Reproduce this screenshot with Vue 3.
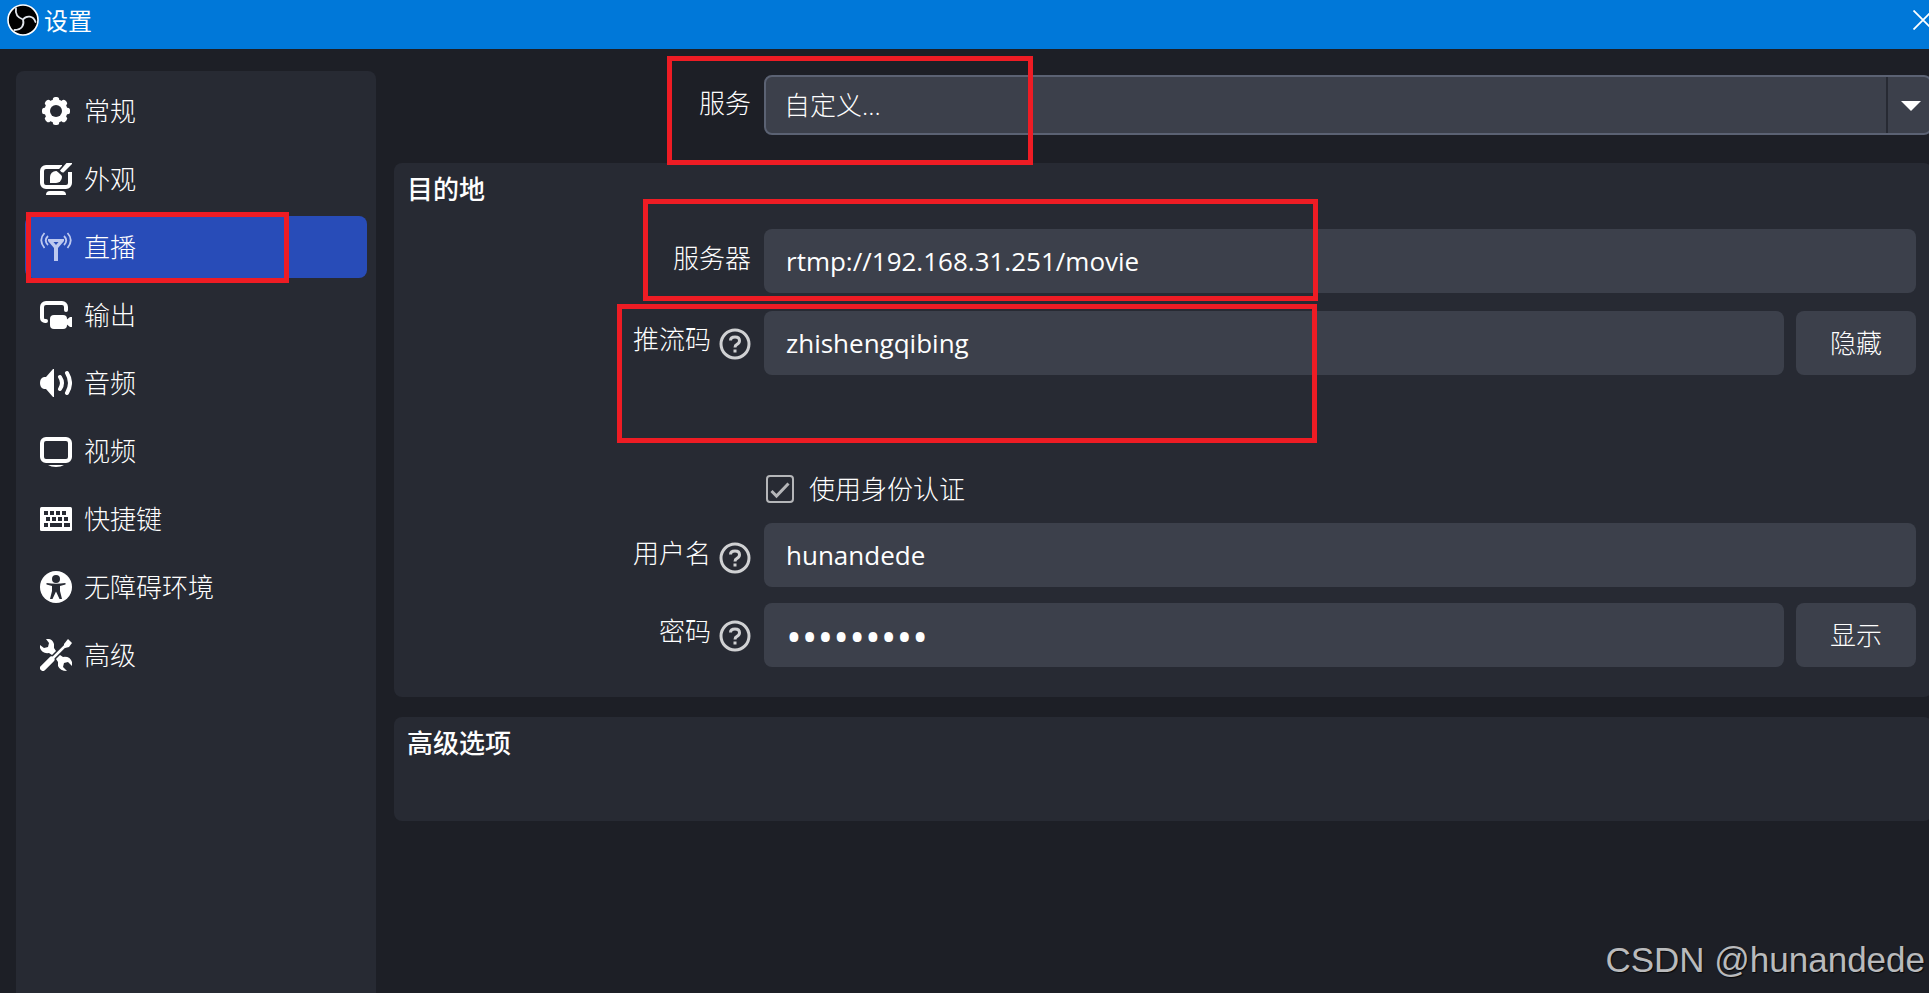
<script setup>
import { ref } from 'vue'

const nav = [
  { id: 'general', label: '常规' },
  { id: 'appearance', label: '外观' },
  { id: 'stream', label: '直播' },
  { id: 'output', label: '输出' },
  { id: 'audio', label: '音频' },
  { id: 'video', label: '视频' },
  { id: 'hotkeys', label: '快捷键' },
  { id: 'accessibility', label: '无障碍环境' },
  { id: 'advanced', label: '高级' },
]
const active = ref('stream')
const service = ref('custom')
const server = ref('rtmp://192.168.31.251/movie')
const streamKey = ref('zhishengqibing')
const useAuth = ref(true)
const username = ref('hunandede')
const password = ref('123456789')
const keyVisible = ref(true)
const passwordVisible = ref(false)
</script>

<template>
  <div class="window">
    <header class="titlebar">
      <svg class="logo" viewBox="0 0 32 32" aria-hidden="true">
        <circle cx="16" cy="16" r="15" fill="#000" stroke="#fff" stroke-width="1.6" />
        <g fill="none" stroke="#e2e6ec" stroke-width="1.8" stroke-linecap="round">
          <path d="M9 4.500C8 10 10.500 13.500 16 15.500M16 15.500C19.500 11 26.500 11.500 28.500 18M16 15.500C17.500 21 15 26 7.500 26" />
        </g>
      </svg>
      <h1 class="title">设置</h1>
      <button class="close" type="button" aria-label="关闭">
        <svg viewBox="0 0 20 20" aria-hidden="true"><path d="M0.500 0.500L19.500 19.500M19.500 0.500L0.500 19.500" stroke="#fff" stroke-width="1.800" /></svg>
      </button>
    </header>

    <div class="body">
      <nav class="sidebar">
        <button
          v-for="item in nav"
          :key="item.id"
          type="button"
          class="nav-item"
          :class="{ active: active === item.id }"
          @click="active = item.id"
        >
          <svg v-if="item.id === 'general'" class="icon" viewBox="0 0 32 32">
            <g fill="#fff">
              <rect v-for="a in [0, 45, 90, 135]" :key="a" x="12.800" y="2" width="6.400" height="28" rx="2.500" :transform="`rotate(${a} 16 16)`" />
              <circle cx="16" cy="16" r="11.500" />
            </g>
            <circle cx="16" cy="16" r="6" fill="#272a33" />
          </svg>
          <svg v-else-if="item.id === 'appearance'" class="icon" viewBox="0 0 32 32">
            <path d="M22 4H6a4 4 0 0 0-4 4v12a4 4 0 0 0 4 4h20a4 4 0 0 0 4-4V9" fill="none" stroke="#fff" stroke-width="4" />
            <path d="M10 20v-6a6 6 0 1 1 6 6z" fill="#fff" />
            <path d="M20 11L29 1" stroke="#272a33" stroke-width="8" />
            <path d="M20 7.500L26.500 0H32v1L23.500 9.500Q21.500 10 20 7.500z" fill="#fff" />
            <path d="M6 32q0-4 4-4h12q4 0 4 4z" fill="#fff" />
          </svg>
          <svg v-else-if="item.id === 'stream'" class="icon" viewBox="0 0 32 32">
            <path d="M8 8h16v2l-6 7V30h-4V17l-6-7z" fill="#bdc9ef" />
            <path d="M13.500 11h5L16 14z" fill="#284cb8" />
            <path d="M4.500 2Q-2 9 4.500 17M8 5Q3.500 9.500 8 14M27.500 2q6.500 7 0 15M24 5q4.500 4.500 0 9" fill="none" stroke="#bdc9ef" stroke-width="1.800" />
          </svg>
          <svg v-else-if="item.id === 'output'" class="icon" viewBox="0 0 32 32">
            <path d="M26 11V8a4 4 0 0 0-4-4H6a4 4 0 0 0-4 4v11a3 3 0 0 0 3 3h1" fill="none" stroke="#fff" stroke-width="4" stroke-linecap="round" />
            <rect x="10" y="16" width="17" height="14" rx="4" fill="#fff" />
            <path d="M25 22l5-4h2v10h-2l-5-4z" fill="#fff" />
          </svg>
          <svg v-else-if="item.id === 'audio'" class="icon" viewBox="0 0 32 32">
            <path d="M14 2v28h-1L6 22H4q-4-1-4-6t4-6h2l7-8z" fill="#fff" />
            <path d="M20 10q4 6 0 12M27 6q6 10 0 20" fill="none" stroke="#fff" stroke-width="4" stroke-linecap="round" />
          </svg>
          <svg v-else-if="item.id === 'video'" class="icon" viewBox="0 0 32 32">
            <rect x="2" y="4" width="28" height="22" rx="4" fill="none" stroke="#fff" stroke-width="4" />
            <path d="M8 30h16q-3 2-8 2t-8-2z" fill="#fff" />
          </svg>
          <svg v-else-if="item.id === 'hotkeys'" class="icon" viewBox="0 0 32 32">
            <rect y="4" width="32" height="24" rx="1.500" fill="#fff" />
            <path d="M4 8h4v4H4zM10 8h4v4h-4zM16 8h4v4h-4zM22 8h4v4h-4zM6 14h4v4H6zM12 14h4v4h-4zM18 14h4v4h-4zM24 14h4v4h-4zM4 20h4v4H4zM10 20h12v4H10zM24 20h6v4h-6z" fill="#272a33" />
          </svg>
          <svg v-else-if="item.id === 'accessibility'" class="icon" viewBox="0 0 32 32">
            <circle cx="16" cy="16" r="16" fill="#fff" />
            <circle cx="16" cy="8" r="4" fill="#272a33" />
            <path d="M6.500 12Q16 13.500 25.500 12v1.500L20 15v5l2 8h-2.500L16 20.500 12.500 28H10l2-8v-5l-5.500-1.500z" fill="#272a33" />
          </svg>
          <svg v-else class="icon" viewBox="0 0 32 32">
            <path d="M12 20L27 5" stroke="#fff" stroke-width="2.500" />
            <path d="M24 5l4-5 4 4-3 4-4 1-1-1z" fill="#fff" />
            <path d="M3 29L11.500 20.500" stroke="#fff" stroke-width="6" stroke-linecap="round" />
            <path d="M6 0Q12-1 14 5v4l2 3-4 4-3-2Q2 15 0 9V6l4 3 4-1 1-4z" fill="#fff" />
            <path d="M16 20l4-4 3 2q7-1 9 5v4l-4-4-4 1-1 4 4 4q-7 0-9-5l0-4z" fill="#fff" />
          </svg>
          <span>{{ item.label }}</span>
        </button>
        <i class="mark mark-nav"></i>
      </nav>

      <main class="main">
        <div class="row service-row">
          <label class="label" for="service">服务</label>
          <div class="select-wrap">
            <select id="service" v-model="service" class="select">
              <option value="custom">自定义...</option>
            </select>
            <svg class="arrow" viewBox="0 0 20 10" aria-hidden="true"><path d="M0 0h20L10 10z" fill="#fff" /></svg>
          </div>
          <i class="mark mark-service"></i>
        </div>

        <section class="group destination">
          <h2 class="group-title">目的地</h2>
          <div class="row server-row">
            <label class="label" for="server">服务器</label>
            <input id="server" v-model="server" class="field" type="text" />
            <i class="mark mark-server"></i>
          </div>
          <div class="row key-row">
            <label class="label" for="key">推流码
              <svg class="help" viewBox="0 0 32 32" aria-hidden="true"><circle cx="16" cy="16" r="14" /><path d="M11.500 12.500Q11.500 9 16 9t4.500 3.800Q20.500 15 18 16.300 16 17.300 16 19.500" /><path d="M16 21.500v3" /></svg>
            </label>
            <input id="key" v-model="streamKey" class="field" :type="keyVisible ? 'text' : 'password'" />
            <button class="btn" type="button" @click="keyVisible = !keyVisible">{{ keyVisible ? '隐藏' : '显示' }}</button>
            <i class="mark mark-key"></i>
          </div>
          <div class="row check-row">
            <span class="label"></span>
            <label class="check"><input v-model="useAuth" type="checkbox" /><span>使用身份认证</span></label>
          </div>
          <div class="row user-row">
            <label class="label" for="user">用户名
              <svg class="help" viewBox="0 0 32 32" aria-hidden="true"><circle cx="16" cy="16" r="14" /><path d="M11.500 12.500Q11.500 9 16 9t4.500 3.800Q20.500 15 18 16.300 16 17.300 16 19.500" /><path d="M16 21.500v3" /></svg>
            </label>
            <input id="user" v-model="username" class="field" type="text" />
          </div>
          <div class="row">
            <label class="label" for="pass">密码
              <svg class="help" viewBox="0 0 32 32" aria-hidden="true"><circle cx="16" cy="16" r="14" /><path d="M11.500 12.500Q11.500 9 16 9t4.500 3.800Q20.500 15 18 16.300 16 17.300 16 19.500" /><path d="M16 21.500v3" /></svg>
            </label>
            <input id="pass" v-model="password" class="field" :type="passwordVisible ? 'text' : 'password'" />
            <button class="btn" type="button" @click="passwordVisible = !passwordVisible">{{ passwordVisible ? '隐藏' : '显示' }}</button>
          </div>
        </section>

        <section class="group advanced">
          <h2 class="group-title">高级选项</h2>
        </section>
      </main>
    </div>
    <div class="watermark">CSDN @hunandede</div>
  </div>
</template>

<style>
body {
  margin: 0;
  background: #1d1f26;
}
</style>

<style scoped>
.window {
  position: relative;
  display: flex;
  flex-direction: column;
  min-height: 100vh;
  overflow: hidden;
  background: #1d1f26;
  color: #fefefe;
  font: 300 26px/32px "Open Sans", "Noto Sans CJK SC", sans-serif;
}
.window * {
  box-sizing: border-box;
}
button,
input,
select {
  margin: 0;
  border: 0;
  color: inherit;
  font: inherit;
}
.titlebar {
  display: flex;
  align-items: flex-start;
  height: 49px;
  padding: 4px 0 0 7px;
  background: #0078d9;
}
.logo {
  width: 32px;
  height: 32px;
}
.title {
  flex: 1;
  margin: 0 0 0 5px;
  font: 400 24px/32px "Noto Sans CJK SC", sans-serif;
}
.close {
  flex: none;
  width: 20px;
  height: 20px;
  margin: 6px -4px 0 0;
  padding: 0;
  background: none;
}
.close svg {
  display: block;
}
.body {
  display: flex;
  flex: 1;
  gap: 18px;
  padding-left: 16px;
}
.sidebar {
  position: relative;
  display: flex;
  flex: none;
  flex-direction: column;
  gap: 6px;
  width: 360px;
  margin-top: 22px;
  padding: 9px;
  border-radius: 8px 8px 0 0;
  background: #272a33;
}
.nav-item {
  display: flex;
  align-items: center;
  gap: 12px;
  height: 62px;
  padding: 0 15px;
  border-radius: 8px;
  background: none;
  text-align: left;
}
.nav-item.active {
  background: #284cb8;
}
.icon {
  width: 32px;
  height: 32px;
}
.main {
  flex: 1;
  min-width: 0;
  margin-right: -3px;
  padding-top: 26px;
}
.row {
  position: relative;
  display: flex;
  align-items: flex-start;
}
.label {
  display: flex;
  flex: none;
  justify-content: flex-end;
  gap: 8px;
  width: 357px;
  margin-right: 13px;
  padding-top: 12px;
}
.help {
  width: 32px;
  height: 32px;
  margin-top: 5px;
  fill: none;
  stroke: #d0d1d3;
  stroke-width: 3;
}
.field {
  flex: 1;
  min-width: 0;
  height: 64px;
  padding: 0 22px;
  border-radius: 8px;
  background: #3c404b;
  font-weight: 400;
}
.field[type="password"] {
  font-size: 42px;
}
.btn {
  flex: none;
  width: 120px;
  height: 64px;
  margin-left: 12px;
  padding: 0;
  border-radius: 8px;
  background: #3c404b;
}
.select-wrap {
  position: relative;
  flex: 1;
}
.select {
  display: block;
  width: 100%;
  height: 60px;
  padding: 0 18px;
  border: 2px solid #5b6273;
  border-radius: 8px;
  appearance: none;
  background: linear-gradient(#272a33, #272a33) right 42px top 0 / 2px 100% no-repeat #3c404b;
}
.arrow {
  position: absolute;
  top: 26px;
  right: 11px;
  width: 20px;
  height: 10px;
  pointer-events: none;
}
.group {
  padding: 0 16px 0 13px;
  border-radius: 8px;
  background: #272a33;
}
.destination {
  margin-top: 28px;
  padding-bottom: 30px;
}
.destination .row {
  margin-left: -13px;
}
.group-title {
  margin: 0;
  padding: 10px 0 24px;
  font-size: 26px;
  font-weight: 500;
  line-height: 32px;
}
.advanced {
  min-height: 104px;
  margin-top: 20px;
}
.server-row {
  margin-bottom: 18px;
}
.user-row .label {
  padding-top: 14px;
}
.check-row {
  margin-top: 98px;
}
.check-row .label {
  padding: 0;
}
.check {
  display: flex;
  align-items: center;
  gap: 15px;
  height: 32px;
  margin-left: 2px;
}
.check input {
  width: 28px;
  height: 28px;
  border: 2px solid #b5b6b9;
  border-radius: 4px;
  appearance: none;
}
.check input:checked {
  background: url("data:image/svg+xml,%3Csvg xmlns='http://www.w3.org/2000/svg' viewBox='0 0 24 24'%3E%3Cpath d='M3.500 14L8.500 19L20.500 6.500' fill='none' stroke='%23b5b6b9' stroke-width='3'/%3E%3C/svg%3E") center / 24px 24px no-repeat;
}
.user-row {
  margin-top: 18px;
  margin-bottom: 16px;
}
.mark {
  position: absolute;
  border: 5px solid #ee1c24;
  pointer-events: none;
}
.mark-nav {
  top: 141px;
  left: 10px;
  width: 263px;
  height: 71px;
}
.mark-service {
  top: -19px;
  left: 273px;
  width: 366px;
  height: 109px;
}
.mark-server {
  top: -30px;
  left: 249px;
  width: 675px;
  height: 102px;
}
.mark-key {
  top: -7px;
  left: 223px;
  width: 700px;
  height: 139px;
}
.server-row .label {
  padding-top: 13px;
}
.watermark {
  position: absolute;
  right: 4px;
  bottom: 13px;
  color: #b9babc;
  font: 400 35px/40px "Liberation Sans", Arial, sans-serif;
  text-shadow: 1px 1px 1px #08090b;
}
</style>
